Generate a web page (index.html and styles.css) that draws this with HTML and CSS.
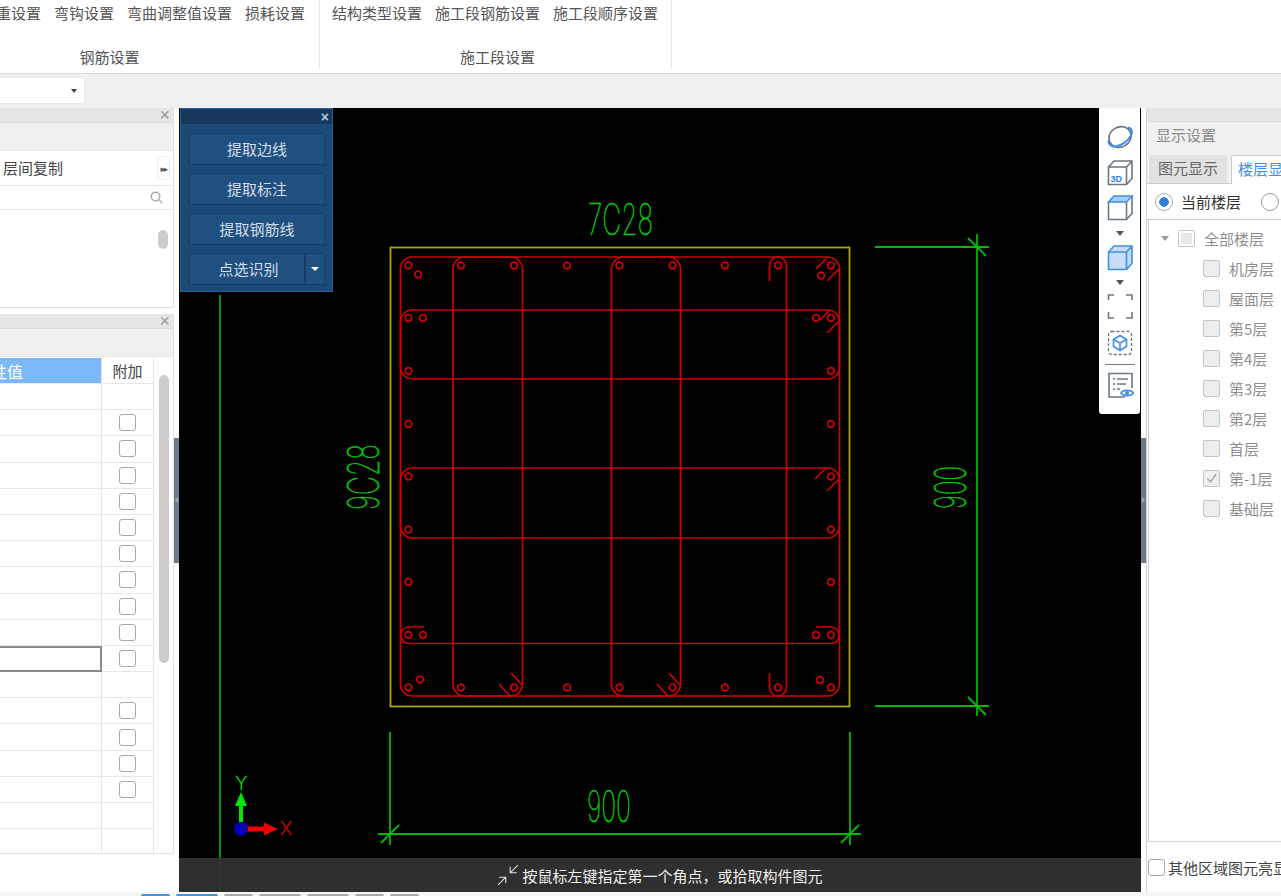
FILE: index.html
```html
<!DOCTYPE html>
<html lang="zh-CN">
<head>
<meta charset="utf-8">
<title>钢筋设置</title>
<link rel="stylesheet" href="styles.css">
</head>
<body>
<div class="app">
  <header class="ribbon">
    <section class="group group-rebar">
      <div class="items"><span>比重设置</span><span>弯钩设置</span><span>弯曲调整值设置</span><span>损耗设置</span></div>
      <div class="group-label">钢筋设置</div>
    </section>
    <section class="group group-stage">
      <div class="items"><span>结构类型设置</span><span>施工段钢筋设置</span><span>施工段顺序设置</span></div>
      <div class="group-label">施工段设置</div>
    </section>
  </header>
  <div class="toolbar">
    <div class="combo"><i class="tri tri-dark"></i></div>
  </div>
  <main class="main">
    <aside class="left">
      <section class="panel panel-top">
        <div class="panel-head"><span class="close">×</span></div>
        <div class="panel-sub"></div>
        <div class="tool-row"><span>层间复制</span><span class="more">▸▸</span></div>
        <div class="search">
          <svg class="search-ico" viewBox="0 0 14 14"><circle cx="6" cy="6" r="4.6"/><path d="M9.5 9.5 13 13"/></svg>
        </div>
        <div class="list"><div class="thumb thumb-short"></div></div>
      </section>
      <section class="panel panel-bottom">
        <div class="panel-head"><span class="close">×</span></div>
        <div class="panel-sub panel-sub-tall"></div>
        <div class="table-wrap">
          <div class="table">
            <div class="row row-head"><div class="cell-val cell-blue"><span>属性值</span></div><div class="cell-add">附加</div></div>
            <div class="row"><div class="cell-val"></div><div class="cell-add"></div></div>
            <div class="row"><div class="cell-val"></div><div class="cell-add"><i class="box"></i></div></div>
            <div class="row"><div class="cell-val"></div><div class="cell-add"><i class="box"></i></div></div>
            <div class="row"><div class="cell-val"></div><div class="cell-add"><i class="box"></i></div></div>
            <div class="row"><div class="cell-val"></div><div class="cell-add"><i class="box"></i></div></div>
            <div class="row"><div class="cell-val"></div><div class="cell-add"><i class="box"></i></div></div>
            <div class="row"><div class="cell-val"></div><div class="cell-add"><i class="box"></i></div></div>
            <div class="row"><div class="cell-val"></div><div class="cell-add"><i class="box"></i></div></div>
            <div class="row"><div class="cell-val"></div><div class="cell-add"><i class="box"></i></div></div>
            <div class="row"><div class="cell-val"></div><div class="cell-add"><i class="box"></i></div></div>
            <div class="row"><div class="cell-val cell-selected"></div><div class="cell-add"><i class="box"></i></div></div>
            <div class="row"><div class="cell-val"></div><div class="cell-add"></div></div>
            <div class="row"><div class="cell-val"></div><div class="cell-add"><i class="box"></i></div></div>
            <div class="row"><div class="cell-val"></div><div class="cell-add"><i class="box"></i></div></div>
            <div class="row"><div class="cell-val"></div><div class="cell-add"><i class="box"></i></div></div>
            <div class="row"><div class="cell-val"></div><div class="cell-add"><i class="box"></i></div></div>
            <div class="row"><div class="cell-val"></div><div class="cell-add"></div></div>
            <div class="row row-last"><div class="cell-val"></div><div class="cell-add"></div></div>
          </div>
          <div class="scroll"><div class="thumb thumb-long"></div></div>
        </div>
      </section>
    </aside>
    <div class="gutter"><div class="handle"><i class="handle-arrow handle-left"></i></div></div>
    <div class="canvas">
      <svg class="drawing" viewBox="179 108 962 784" width="962" height="784">
        <g class="dim">
          <path class="olive" d="M220 295V892"/>
          <path d="M875 247H989M875 706H989M977 234V716M968 238 986 256M968 697 986 715"/>
          <path d="M390 732V845M850 732V845M378 834H861M381 843 399 825M841 843 859 825"/>
        </g>
        <text class="cad" x="588" y="235" textLength="65" lengthAdjust="spacingAndGlyphs">7C28</text>
        <text class="cad" transform="translate(379 510) rotate(-90)" textLength="66" lengthAdjust="spacingAndGlyphs">9C28</text>
        <text class="cad" transform="translate(966 509) rotate(-90)" textLength="43" lengthAdjust="spacingAndGlyphs">900</text>
        <text class="cad" x="587" y="822" textLength="44" lengthAdjust="spacingAndGlyphs">900</text>
        <rect class="outline" x="390.500" y="247.500" width="459" height="459"/>
        <g class="rebar">
          <rect x="400.500" y="257" width="439" height="439" rx="12"/>
          <rect x="453" y="257" width="69.500" height="439" rx="12"/>
          <rect x="611.500" y="257" width="69" height="439" rx="12"/>
          <path d="M769.500 281V265.500a8.500 8.500 0 0 1 17 0V687.500a8.500 8.500 0 0 1-17 0V673"/>
          <rect x="400.500" y="310" width="439" height="69" rx="12"/>
          <rect x="400.500" y="468" width="439" height="70" rx="12"/>
          <path d="M424 627H409a8.200 8.200 0 0 0 0 16.500H831a8.200 8.200 0 0 0 0-16.500H816"/>
          <path d="M816 269 827 258M827 281 839 269"/>
          <path d="M820 320 830 310M827 333 839 321"/>
          <path d="M815 479 826 468M827 491 839 479"/>
          <path d="M499 684 510 696M511 673 522 685"/>
          <path d="M657 684 668 696M669 673 680 685"/>
          <circle cx="408.500" cy="265.500" r="3.300"/><circle cx="461" cy="265.500" r="3.300"/><circle cx="514" cy="265.500" r="3.300"/>
          <circle cx="567" cy="265.500" r="3.300"/><circle cx="619.500" cy="265.500" r="3.300"/><circle cx="672.500" cy="265.500" r="3.300"/>
          <circle cx="725" cy="265.500" r="3.300"/><circle cx="778" cy="265.500" r="3.300"/><circle cx="831" cy="265.500" r="3.300"/>
          <circle cx="418" cy="274.500" r="3.300"/><circle cx="821" cy="275.500" r="3.300"/>
          <circle cx="408.500" cy="318" r="3.300"/><circle cx="423" cy="318" r="3.300"/><circle cx="816" cy="318" r="3.300"/><circle cx="831" cy="318" r="3.300"/>
          <circle cx="408.500" cy="371" r="3.300"/><circle cx="831" cy="371" r="3.300"/>
          <circle cx="408.500" cy="424" r="3.300"/><circle cx="831" cy="424" r="3.300"/>
          <circle cx="408.500" cy="476.500" r="3.300"/><circle cx="831" cy="476.500" r="3.300"/>
          <circle cx="408.500" cy="529.500" r="3.300"/><circle cx="831" cy="529.500" r="3.300"/>
          <circle cx="408.500" cy="582" r="3.300"/><circle cx="831" cy="582" r="3.300"/>
          <circle cx="408.500" cy="635" r="3.300"/><circle cx="423" cy="635" r="3.300"/><circle cx="816" cy="635" r="3.300"/><circle cx="831" cy="635" r="3.300"/>
          <circle cx="420" cy="679.500" r="3.300"/><circle cx="820" cy="680" r="3.300"/>
          <circle cx="408.500" cy="687.500" r="3.300"/><circle cx="461" cy="687.500" r="3.300"/><circle cx="514" cy="687.500" r="3.300"/>
          <circle cx="567" cy="687.500" r="3.300"/><circle cx="619.500" cy="687.500" r="3.300"/><circle cx="672.500" cy="687.500" r="3.300"/>
          <circle cx="725" cy="687.500" r="3.300"/><circle cx="778" cy="687.500" r="3.300"/><circle cx="831" cy="687.500" r="3.300"/>
        </g>
        <g class="axis">
          <path class="axis-y" d="M239 822H243V806H247L241 792 235 806H239Z"/>
          <path class="axis-x" d="M246 826.500H264V822.500L278 829 264 835.500V831.500H246Z"/>
          <circle class="axis-o" cx="241" cy="829" r="7"/>
          <text class="axis-y axis-label" x="235.500" y="790">Y</text>
          <text class="axis-x axis-label" x="280.500" y="835">X</text>
        </g>
      </svg>
      <div class="float">
        <div class="float-head"><span class="float-close">×</span></div>
        <div class="float-body">
          <button class="fbtn">提取边线</button>
          <button class="fbtn">提取标注</button>
          <button class="fbtn">提取钢筋线</button>
          <div class="fsplit"><button class="fbtn fbtn-main">点选识别</button><button class="fbtn fbtn-arrow"><i class="tri tri-white"></i></button></div>
        </div>
      </div>
      <nav class="viewbar">
        <svg class="vi" viewBox="0 0 28 28"><ellipse class="s-gray" cx="14" cy="14" rx="11.500" ry="10" transform="rotate(-30 14 14)"/><path class="s-blue s-thick" d="M2.500 17.500C2 21 5 24 9.500 23.500 15 23 22 18 25 12.500 27 9 26 5.500 22 4.500"/></svg>
        <svg class="vi" viewBox="0 0 28 28"><path class="s-gray" d="M2.500 9 8 3H26V20.500L20.500 26.500H2.500ZM2.500 9H20.500V26.500M20.500 9 26 3"/><text class="vi-3d" x="4.500" y="23.500">3D</text></svg>
        <svg class="vi" viewBox="0 0 28 28"><path class="s-gray" d="M2.500 9V26.500H20.500L26 20.500V3M20.500 9V26.500"/><path class="s-blue f-blue" d="M2.500 9 8 3H26L20.500 9Z"/></svg>
        <i class="tri tri-gray vi-tri"></i>
        <svg class="vi vi-cube" viewBox="0 0 28 28"><path class="s-blue f-light" d="M2.500 9 8 3H26V20.500L20.500 26.500H2.500ZM2.500 9H20.500V26.500M20.500 9 26 3"/></svg>
        <i class="tri tri-gray vi-tri"></i>
        <svg class="vi vi-close" viewBox="0 0 28 28"><path class="s-gray" d="M2.500 8V3H8M20 3H26V8M2.500 20V26H8M20 26H26V20"/></svg>
        <svg class="vi vi-mid" viewBox="0 0 28 28"><rect class="s-dash" x="2.500" y="2.500" width="23" height="23" rx="3"/><path class="s-blue" d="M14 6.500 20.500 10.500V17.500L14 21.500 7.500 17.500V10.500ZM7.500 10.500 14 14 20.500 10.500M14 14V21.500"/></svg>
        <div class="vi-sep"></div>
        <svg class="vi" viewBox="0 0 28 28"><path class="s-gray" d="M19 26H3V2.500H26V17"/><path class="s-gray" d="M7 8H9M11 8H22M7 13H9M11 13H20M7 18H9M11 18H14"/><path class="s-blue f-white" d="M15 22C17 18.500 25 18.500 27.500 22 25 25.500 17 25.500 15 22Z"/><circle class="f-blue-solid" cx="21" cy="22" r="2"/></svg>
      </nav>
      <div class="status">
        <svg class="status-ico" viewBox="0 0 20 20"><path d="M19 1 12 8M12 2.500V8H18M1 19 8 12M2 12H8V17.500"/></svg>
        <span>按鼠标左键指定第一个角点，或拾取构件图元</span>
      </div>
    </div>
    <div class="gutter"><div class="handle"><i class="handle-arrow handle-right"></i></div></div>
    <aside class="right">
      <div class="panel-head"></div>
      <div class="right-title">显示设置</div>
      <div class="tabs"><span class="tab">图元显示</span><span class="tab tab-active">楼层显示</span></div>
      <div class="radios">
        <span class="radio radio-on"></span><span class="radio-label">当前楼层</span><span class="radio"></span>
      </div>
      <div class="tree">
        <div class="node node-root"><i class="tree-tri"></i><i class="cb cb-partial"></i><span>全部楼层</span></div>
        <div class="node"><i class="cb"></i><span>机房层</span></div>
        <div class="node"><i class="cb"></i><span>屋面层</span></div>
        <div class="node"><i class="cb"></i><span>第5层</span></div>
        <div class="node"><i class="cb"></i><span>第4层</span></div>
        <div class="node"><i class="cb"></i><span>第3层</span></div>
        <div class="node"><i class="cb"></i><span>第2层</span></div>
        <div class="node"><i class="cb"></i><span>首层</span></div>
        <div class="node"><i class="cb cb-on"><svg viewBox="0 0 16 16"><path d="M3.500 8 7 11.500 13 3.500"/></svg></i><span>第-1层</span></div>
        <div class="node"><i class="cb"></i><span>基础层</span></div>
      </div>
      <div class="right-foot"><i class="box box-foot"></i><span>其他区域图元亮显</span></div>
    </aside>
  </main>
  <footer class="taskbar"><i class="tk tk-a"></i><i class="tk tk-b"></i><i class="tk tk-c"></i><i class="tk tk-d"></i><i class="tk tk-d"></i><i class="tk tk-c"></i><i class="tk tk-c"></i></footer>
</div>
</body>
</html>
```

FILE: styles.css
```css
* { box-sizing: border-box; }
html, body { margin: 0; padding: 0; height: 100%; overflow: hidden; background: #fff; }
body { font-family: "Noto Sans CJK SC", "Liberation Sans", sans-serif; font-size: 15px; color: #444; }
i { display: block; }
.app { width: 1281px; height: 896px; display: flex; flex-direction: column; overflow: hidden; }

/* ribbon */
.ribbon { height: 74px; flex: none; display: flex; background: #fff; border-bottom: 1px solid #dcdcdc; margin-left: -16px; }
.group { height: 69px; border-right: 1px solid #e4e4e4; display: flex; flex-direction: column; font-size: 15px; line-height: 20px; color: #555; }
.group-rebar { width: 336px; }
.group-stage { width: 352px; padding-left: 12px; }
.items { display: flex; gap: 13px; height: 49px; padding-top: 3px; white-space: nowrap; }
.group-rebar .items { margin-left: -3px; }
.group-label { text-align: center; line-height: 24px; padding-right: 8px; }
.group-rebar .group-label { padding-right: 84px; }

/* toolbar */
.toolbar { height: 34px; flex: none; background: #f0f0f0; padding-top: 3px; }
.combo { width: 85px; height: 27px; background: #fff; border: 1px solid #e8e8e8; border-left: none; border-radius: 0 3px 3px 0; display: flex; align-items: center; justify-content: flex-end; padding-right: 7px; }
.tri { width: 0; height: 0; border-left: 3px solid transparent; border-right: 3px solid transparent; border-top: 4px solid #444; }

/* main */
.main { height: 784px; flex: none; display: flex; }
.left { width: 174px; flex: none; display: flex; flex-direction: column; background: #fff; gap: 6px; }
.panel { border-right: 1px solid #e2e2e2; border-bottom: 1px solid #e2e2e2; display: flex; flex-direction: column; }
.panel-top { height: 200px; }
.panel-bottom { height: 540px; }
.panel-head { height: 15px; flex: none; background: #e6e6e6; border-bottom: 1px solid #dcdcdc; display: flex; justify-content: flex-end; align-items: center; padding-right: 3px; }
.close { font: 18px/14px "Liberation Sans", sans-serif; color: #999; }
.panel-sub { height: 28px; flex: none; background: #f0f0f0; border-bottom: 1px solid #e4e4e4; }
.tool-row { height: 35px; flex: none; display: flex; align-items: center; justify-content: space-between; padding: 0 3px; color: #444; border-bottom: 1px solid #e6e6e6; line-height: 20px; }
.more { width: 13px; height: 24px; font: 9px/24px "DejaVu Sans", sans-serif; letter-spacing: -1.5px; border: 1px solid #efefef; border-radius: 3px; color: #555; text-align: center; }
.search { height: 24px; flex: none; display: flex; align-items: center; justify-content: flex-end; padding-right: 10px; border-bottom: 1px solid #e6e6e6; }
.search-ico { width: 13px; height: 13px; fill: none; stroke: #aaa; stroke-width: 1.6; }
.list { flex: 1; padding: 20px 5px 0 0; display: flex; flex-direction: column; align-items: flex-end; }
.thumb { width: 10px; background: #cdcdcd; border-radius: 5px; }
.thumb-short { height: 19px; }
.thumb-long { height: 288px; }
.table-wrap { flex: 1; display: flex; background: #fff; padding-top: 1px; }
.table { width: 154px; flex: none; border-right: 1px solid #e6e6e6; }
.row { display: flex; height: 26.2px; border-bottom: 1px solid #e8e8e8; }
.row-head { height: 26px; }
.row-last { border-bottom: none; height: 24px; }
.cell-val { width: 102px; flex: none; border-right: 1px solid #e6e6e6; }
.cell-add { flex: 1; display: flex; align-items: center; justify-content: center; color: #444; }
.cell-blue { background: #7db8f8; color: #fff; font-size: 16px; display: flex; justify-content: flex-end; align-items: center; padding-right: 78px; overflow: hidden; white-space: nowrap; }
.cell-blue span { flex: none; }
.cell-selected { border: 2px solid #8a8a8a; border-left: none; height: 26px; }
.box { width: 17px; height: 17px; border: 1px solid #a8a8a8; border-radius: 3px; background: #fff; }
.scroll { flex: 1; padding: 17px 5px 0; }

/* gutter */
.gutter { width: 5px; flex: none; display: flex; align-items: center; background: #fff; }
.handle { width: 5px; height: 125px; background: #6c7a87; display: flex; align-items: center; justify-content: center; }
.handle-arrow { width: 0; height: 0; border-top: 3px solid transparent; border-bottom: 3px solid transparent; }
.handle-left { border-right: 3px solid #a9b2ba; }
.handle-right { border-left: 3px solid #a9b2ba; }

/* canvas */
.canvas { width: 962px; flex: none; position: relative; background: #000; overflow: hidden; }
.drawing { display: block; }
.dim { fill: none; stroke: #00b800; stroke-width: 1.8; }
.dim .olive { stroke: #009000; stroke-width: 2; }
.outline { fill: none; stroke: #a8a800; stroke-width: 1.8; }
.rebar { fill: none; stroke: #d00000; stroke-width: 1.7; }
.cad { font-family: "Inter", "Liberation Sans", sans-serif; font-weight: 100; font-size: 44px; fill: #00d000; stroke: #00d000; stroke-width: 0.7; }
.axis-y { fill: #00e800; }
.axis-x { fill: #f00000; }
.axis-o { fill: #0000b4; }
.axis-label { font: 100 18px "Inter", "Liberation Sans", sans-serif; stroke-width: 0.6; }
.axis-label.axis-y { stroke: #00e800; }
.axis-label.axis-x { stroke: #f00000; }

/* floating */
.float { position: absolute; left: 1px; top: 0; width: 153px; height: 184px; background: #1c4a78; border: 1px solid #2a5f94; display: flex; flex-direction: column; }
.float-head { height: 15px; flex: none; background: #16375c; display: flex; align-items: center; justify-content: flex-end; padding-right: 3px; }
.float-close { font: bold 14px/14px "Liberation Sans", sans-serif; color: #b9c8d8; }
.float-body { display: flex; flex-direction: column; gap: 8px; padding: 9px 7px 0 8px; }
.fbtn { height: 32px; width: 100%; padding: 0; background: #20507f; border: 1px solid #183c66; color: #d3dde8; font: 15px/20px "Noto Sans CJK SC", sans-serif; }
.fsplit { display: flex; }
.fbtn-main { flex: 1; width: auto; padding-left: 3px; }
.fbtn-arrow { width: 20px; flex: none; display: flex; align-items: center; justify-content: center; }
.tri-white { border-left-width: 4px; border-right-width: 4px; border-top: 4px solid #fff; }

/* view bar */
.viewbar { position: absolute; right: 1px; top: 0; width: 41px; height: 306px; background: #fff; border-radius: 0 0 3px 3px; display: flex; flex-direction: column; align-items: center; padding-top: 15px; }
.vi { width: 28px; height: 28px; flex: none; margin-bottom: 7px; fill: none; }
.vi-close { margin-bottom: 0; }
.vi-cube { margin-bottom: 6px; }
.vi-tri { flex: none; margin: 2.5px 0 7.5px; border-left-width: 4px; border-right-width: 4px; border-top-width: 5px; border-top-color: #555; }
.vi-mid { margin-top: 9px; margin-bottom: 7px; }
.s-gray { fill: none; stroke: #6b7683; stroke-width: 1.6; }
.s-blue { fill: none; stroke: #3f8ee8; stroke-width: 1.6; }
.s-thick { stroke-width: 2; }
.f-blue { fill: #a9cdf7; }
.f-light { fill: #c6dcf7; }
.f-white { fill: #fff; }
.f-blue-solid { fill: #3f8ee8; }
.s-dash { fill: none; stroke: #6b7683; stroke-width: 1.3; stroke-dasharray: 3 2; }
.vi-3d { font: bold 9px "Liberation Sans", sans-serif; fill: #2f7fdc; }
.vi-sep { width: 30px; height: 1px; background: #777; flex: none; margin: 0 0 6px; }

/* status */
.status { position: absolute; left: 0; right: 0; bottom: 0; height: 34px; background: rgba(50, 50, 50, 0.94); display: flex; align-items: center; justify-content: center; gap: 3px; color: #eee; }
.status-ico { width: 22px; height: 22px; fill: none; stroke: #ddd; stroke-width: 1; }

/* right */
.right { flex: 1; min-width: 0; background: #fff; display: flex; flex-direction: column; overflow: hidden; border-left: 1px solid #d0d4d8; }
.right .panel-head { height: 14px; }
.right-title { height: 33px; flex: none; background: #f0f0f0; color: #8a8a8a; line-height: 26px; padding-left: 9px; }
.tabs { height: 29px; flex: none; display: flex; background: #f0f0f0; padding-left: 2px; gap: 4px; border-bottom: 1px solid #ccc; white-space: nowrap; }
.tab { width: 78px; flex: none; height: 28px; background: #e2e2e2; border-radius: 3px 3px 0 0; color: #666; text-align: center; line-height: 26px; }
.tab-active { background: #fff; color: #3f8ee8; border: 1px solid #ccc; border-bottom: none; height: 29px; padding-left: 6px; text-align: left; line-height: 25px; }
.radios { height: 36px; flex: none; display: flex; align-items: center; padding-left: 8px; white-space: nowrap; border-bottom: 1px solid #ccc; }
.radio { width: 18px; height: 18px; border: 1px solid #999; border-radius: 50%; flex: none; background: #fff; }
.radio-on { border-color: #aaa; background: radial-gradient(circle, #2f7fdc 0 4.5px, #fff 5px); }
.radio-label { width: 88px; padding-left: 8px; color: #333; }
.tree { flex: 1; min-height: 0; border-left: 1px solid #ccc; margin-left: 1px; padding-top: 3px; color: #8f8f8f; }
.node { height: 30px; display: flex; align-items: center; padding-left: 54px; gap: 9px; white-space: nowrap; }
.node-root { padding-left: 12px; }
.tree-tri { width: 0; height: 0; border-left: 4px solid transparent; border-right: 4px solid transparent; border-top: 5px solid #999; }
.cb { width: 17px; height: 17px; border: 1px solid #c4c4c4; border-radius: 2px; background: #eee; flex: none; }
.cb svg { display: block; fill: none; stroke: #aaa; stroke-width: 1.6; }
.cb-partial { background: #fff; box-shadow: inset 0 0 0 2px #fff, inset 0 0 0 9px #e8e8e8; }
.right-foot { height: 51px; flex: none; border-top: 1px solid #d4d4d4; display: flex; align-items: center; gap: 3px; padding-left: 1px; white-space: nowrap; color: #444; }
.box-foot { flex: none; }

/* bottom strip */
.taskbar { height: 4px; flex: none; background: #f6f6f6; display: flex; align-items: flex-end; padding-left: 141px; gap: 6px; }
.tk { height: 2px; border-radius: 2px 2px 0 0; background: #aaa; }
.tk-a { width: 29px; background: #4a90e2; }
.tk-b { width: 42px; background: #4a90e2; }
.tk-c { width: 29px; }
.tk-d { width: 42px; }
```
